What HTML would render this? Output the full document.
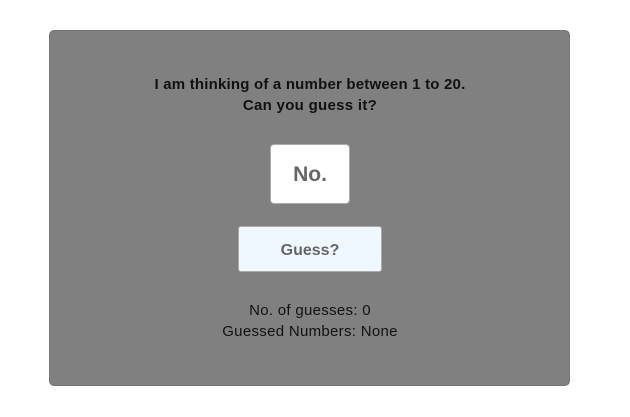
<!DOCTYPE html>
<html><head><style>
body{margin:0;width:630px;height:417px;background:#fff;font-family:"Liberation Sans",sans-serif;position:relative}
.card{position:absolute;left:49px;top:30px;width:521px;height:356px;background:#808080;border-radius:5px;border:1px solid #777;box-sizing:border-box}
.t{position:absolute;left:0;width:620px;text-align:center;color:#111}
.no{position:absolute;left:270px;top:144px;width:80px;height:60px;background:#fff;border:1px solid #aaa;border-radius:4px;box-sizing:border-box;text-align:center;line-height:60px;font-size:21px;font-weight:bold;color:#666}
.btn{position:absolute;left:238px;top:226px;width:144px;height:46px;background:#f0f8ff;border:1px solid #aaa;border-radius:3px;box-sizing:border-box;text-align:center;line-height:48px;font-size:16px;font-weight:bold;color:#666}
</style></head><body>
<div class="card"></div>
<div class="t" style="top:76px;font-size:15px;font-weight:bold;letter-spacing:0.2px">I am thinking of a number between 1 to 20.</div>
<div class="t" style="top:97px;font-size:15px;font-weight:bold;letter-spacing:0.3px">Can you guess it?</div>
<div class="no">No.</div>
<div class="btn">Guess?</div>
<div class="t" style="top:302px;font-size:15px;letter-spacing:0.3px">No. of guesses: 0</div>
<div class="t" style="top:323px;font-size:15px;letter-spacing:0.3px">Guessed Numbers: None</div>
</body></html>
